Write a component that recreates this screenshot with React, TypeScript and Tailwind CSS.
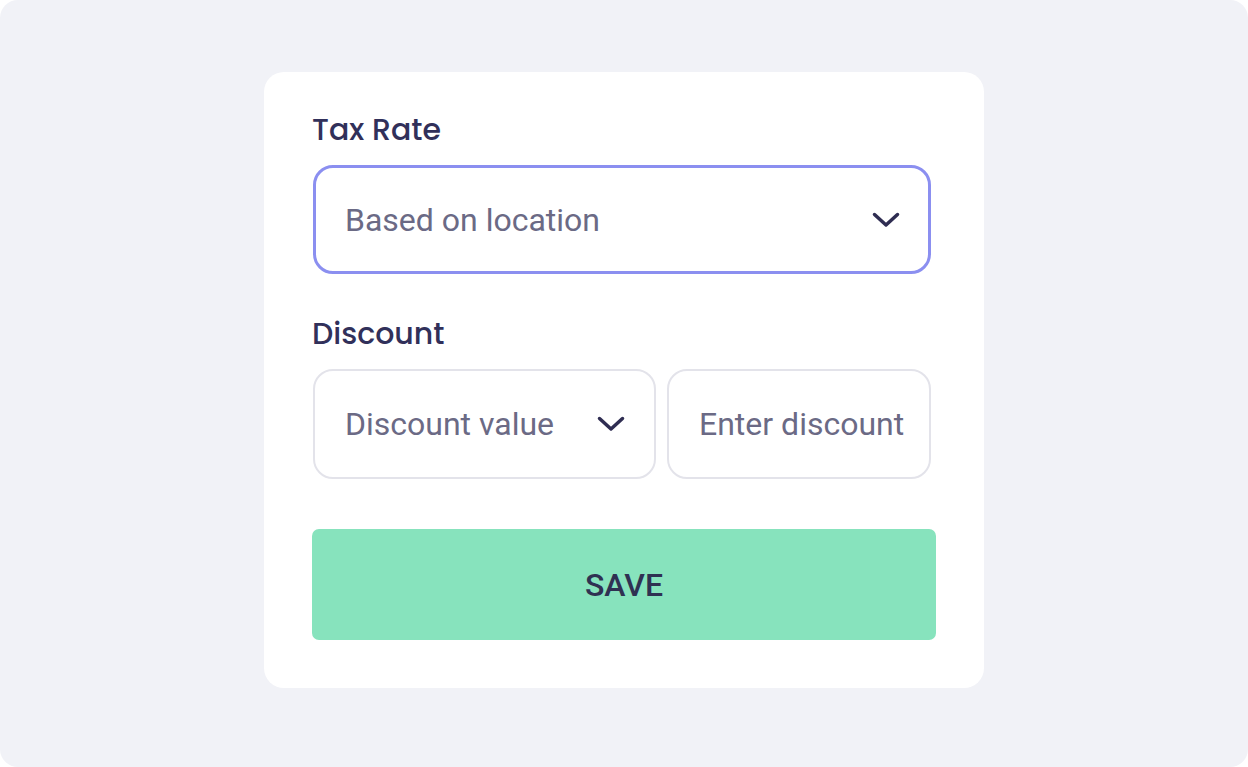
import React from "react";

function Chevron() {
  return (
    <svg width="28" height="16" viewBox="0 0 28 16" fill="none" className="shrink-0">
      <path d="M2.5 2.5L14 13L25.5 2.5" stroke="#2f2d52" strokeWidth="3.5" strokeLinecap="round" strokeLinejoin="round" />
    </svg>
  );
}

export default function App() {
  return (
    <div className="w-[1248px] h-[767px] bg-white">
      <div className="w-full h-full bg-[#f1f2f7] rounded-[18px] flex justify-center pt-[72px]">
        <div className="w-[720px] h-[616px] bg-white rounded-[20px] px-12 pt-[42px] pb-12 flex flex-col">
          {/* Tax rate */}
          <div className="text-[30px] leading-[32px] font-medium text-[#31305a] font-['Poppins','Noto_Sans',sans-serif]">
            Tax Rate
          </div>
          <div className="mt-[19px] ml-px w-[618px] h-[110px] border-[3px] border-[#8b8ff0] rounded-[20px] pl-[29px] pr-[28px] flex items-center justify-between">
            <span className="text-[32px] text-[#6b6a85] font-['Roboto',sans-serif]">Based on location</span>
            <Chevron />
          </div>

          {/* Discount */}
          <div className="mt-[44px] text-[30px] leading-[32px] font-medium text-[#31305a] font-['Poppins','Noto_Sans',sans-serif]">
            Discount
          </div>
          <div className="mt-[19px] ml-px w-[618px] flex gap-[11px]">
            <div className="w-[343px] h-[110px] border-[2.5px] border-[#e3e3ea] rounded-[20px] pl-[30px] pr-[29px] flex items-center justify-between">
              <span className="text-[32px] text-[#6b6a85] font-['Roboto',sans-serif]">Discount value</span>
              <Chevron />
            </div>
            <div className="flex-1 h-[110px] border-[2.5px] border-[#e3e3ea] rounded-[20px] pl-[30px] flex items-center overflow-hidden">
              <span className="text-[32px] text-[#6b6a85] whitespace-nowrap font-['Roboto',sans-serif]">Enter discount</span>
            </div>
          </div>

          <button className="mt-[50px] w-full h-[112px] bg-[#87e3bd] rounded-[7px] flex items-center justify-center text-[32px] font-medium text-[#2f3152] font-['Roboto',sans-serif]">
            SAVE
          </button>
        </div>
      </div>
    </div>
  );
}
